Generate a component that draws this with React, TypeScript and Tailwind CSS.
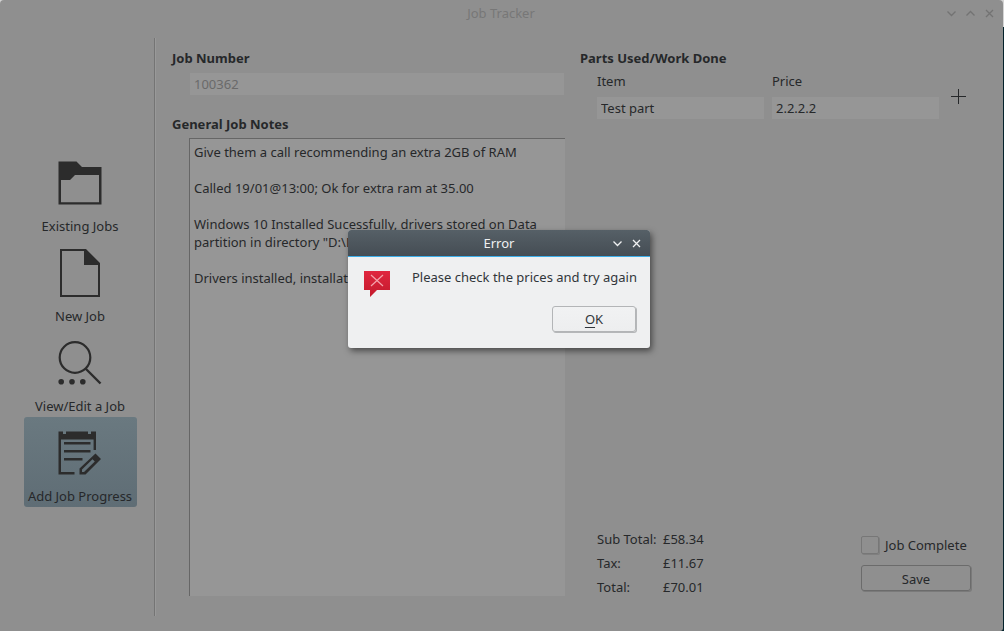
import React, { useState } from "react";

const LINE = "h-[18px] leading-[18px]";
const FIELD =
  "block h-[22px] w-full min-w-0 bg-[#969696] px-1 leading-[22px] text-[#26282a] outline-none";

function FolderIcon() {
  return (
    <svg width="44" height="44" viewBox="0 0 44 44" fill="#2c2c2c" aria-hidden="true">
      <path
        fillRule="evenodd"
        d="M0.5 0.5H18.5L24 6H43.5V43.5H0.5ZM3 19V41.2H41V14H17L12 19Z"
      />
    </svg>
  );
}

function PageIcon() {
  return (
    <svg width="40" height="48" viewBox="0 0 40 48" fill="#2c2c2c" aria-hidden="true">
      <path fillRule="evenodd" d="M0 0H26L40 14V48H0ZM2 2V46H38V16H24V2Z" />
    </svg>
  );
}

function SearchIcon() {
  return (
    <svg width="44" height="44" viewBox="0 0 44 44" fill="#2c2c2c" aria-hidden="true">
      <circle cx="17" cy="16.5" r="15.3" fill="none" stroke="#2c2c2c" strokeWidth="2.2" />
      <path d="M27.5 27.5L42.5 42.5" stroke="#2c2c2c" strokeWidth="2.4" />
      <circle cx="3.2" cy="40.7" r="2.8" />
      <circle cx="14" cy="40.7" r="2.8" />
      <circle cx="24.8" cy="40.7" r="2.8" />
    </svg>
  );
}

function NoteIcon() {
  return (
    <svg width="44" height="44" viewBox="0 0 44 44" fill="#2c2c2c" aria-hidden="true">
      <path d="M0.5 0.5H5V3H8V0.5H30V3H33V0.5H38V19H35.6V8.5H3V41H16.5V43.4H0.5Z" />
      <path d="M6 11H32.5V13.5H6ZM6 19H32.5V21.5H6ZM6 27H24.5V29.5H6Z" />
      <path
        fillRule="evenodd"
        d="M21.5 37.5L37.5 22.5L43 28L27.5 43.5H21.5ZM24 38.5V41H26L36.8 30.4L34.5 28.2Z"
      />
    </svg>
  );
}

function Glyph({ d, color }: { d: string; color: string }) {
  return (
    <svg width="9" height="9" viewBox="0 0 9 9" fill="none" stroke={color} strokeWidth="1.3" aria-hidden="true">
      <path d={d} />
    </svg>
  );
}

const DOWN = "M0.5 2.5L4.5 6.5L8.5 2.5";
const UP = "M0.5 6.5L4.5 2.5L8.5 6.5";
const CROSS = "M1 1L8 8M8 1L1 8";

const NAV = [
  { label: "Existing Jobs", icon: <FolderIcon /> },
  { label: "New Job", icon: <PageIcon /> },
  { label: "View/Edit a Job", icon: <SearchIcon /> },
  { label: "Add Job Progress", icon: <NoteIcon /> },
];

const NOTES = `Give them a call recommending an extra 2GB of RAM

Called 19/01@13:00; Ok for extra ram at 35.00

Windows 10 Installed Sucessfully, drivers stored on Data partition in directory "D:\\Drivers"

Drivers installed, installation complete`;

const TOTALS = [
  ["Sub Total:", "£58.34"],
  ["Tax:", "£11.67"],
  ["Total:", "£70.01"],
];

function ErrorDialog({ onClose }: { onClose: () => void }) {
  return (
    <div
      role="alertdialog"
      aria-labelledby="error-title"
      aria-describedby="error-text"
      className="absolute top-[230px] left-[348px] w-[302px] rounded-[3px] bg-[#eff0f1] text-[#31363b] shadow-[2px_3px_6px_rgba(0,0,0,0.5)]"
    >
      <header className="flex h-[27px] items-center rounded-t-[3px] border-b border-[#3daee9] bg-linear-to-b from-[#566067] to-[#454d54] px-[9px] text-[#eff0f1]">
        <h2 id="error-title" className="flex-1 pt-[2px] pl-[28px] text-center">
          Error
        </h2>
        <div className="flex gap-[10px]">
          <button type="button" aria-label="Minimise">
            <Glyph d={DOWN} color="#eff0f1" />
          </button>
          <button type="button" aria-label="Close" onClick={onClose}>
            <Glyph d={CROSS} color="#eff0f1" />
          </button>
        </div>
      </header>
      <div className="flex justify-between pt-[11px] pr-[13px] pl-[15px]">
        <svg width="28" height="30" viewBox="0 0 28 30" className="mt-[2px]" aria-hidden="true">
          <defs>
            <linearGradient id="alert" x1="0" y1="0" x2="0" y2="1">
              <stop offset="0" stopColor="#e0263f" />
              <stop offset="1" stopColor="#c31a2c" />
            </linearGradient>
          </defs>
          <path d="M1 1H27V20H14L7 27V20H1Z" fill="url(#alert)" />
          <path d="M8 5L20 16M20 5L8 16" stroke="#f3a3ab" strokeWidth="1.2" />
        </svg>
        <p id="error-text" className={LINE}>
          Please check the prices and try again
        </p>
      </div>
      <div className="flex justify-end pt-[6px] pr-[14px] pb-4">
        <button
          type="button"
          onClick={onClose}
          className="h-[26px] w-[84px] rounded-[3px] border border-[#b3b5b7] bg-linear-to-b from-[#f1f2f3] to-[#edeeef] pt-[2px] shadow-[1px_1px_0_#b5b7b9]"
        >
          <span className="underline underline-offset-3">O</span>K
        </button>
      </div>
    </div>
  );
}

export default function App() {
  const [open, setOpen] = useState(true);
  const [active, setActive] = useState("Add Job Progress");

  return (
    <div className="flex min-h-screen flex-col bg-[linear-gradient(#d4d4d4_27px,#04222b_27px)] pr-px font-['Noto_Sans',sans-serif] text-[13px] text-[#26282a]">
      <div className="relative flex flex-1 flex-col rounded-t-[4px] rounded-br-[3px] bg-[#8f8f8f]">
        <header className="flex h-[26px] shrink-0 items-center px-[9px] text-[#777777]">
          <h1 className="flex-1 pt-[2px] pl-[46px] text-center">Job Tracker</h1>
          <div className="flex gap-[10px]">
            <button type="button" aria-label="Minimise window">
              <Glyph d={DOWN} color="#737373" />
            </button>
            <button type="button" aria-label="Maximise window">
              <Glyph d={UP} color="#737373" />
            </button>
            <button type="button" aria-label="Close window">
              <Glyph d={CROSS} color="#737373" />
            </button>
          </div>
        </header>

        <div className="flex flex-1 pt-3 pb-[15px] pl-6">
          <nav className="flex w-[113px] shrink-0 flex-col justify-center">
            {NAV.map(({ label, icon }) => (
              <button
                key={label}
                type="button"
                onClick={() => setActive(label)}
                className={
                  active === label
                    ? "flex h-[90px] flex-col items-center rounded-[3px] bg-linear-to-b from-[#6a7980] to-[#5f6d75] pr-px"
                    : "flex h-[90px] flex-col items-center rounded-[3px] pr-px"
                }
              >
                <span className="flex h-[70px] items-center justify-center pt-[2px]">{icon}</span>
                <span className="leading-[18px] whitespace-nowrap">{label}</span>
              </button>
            ))}
          </nav>
          <div className="ml-[17px] w-[2px] shrink-0 border-r border-l border-r-[#999999] border-l-[#747474]" />

          <form
            className="flex flex-1 gap-[15px] pl-4"
            onSubmit={(event) => event.preventDefault()}
          >
            <section className="flex w-[393px] flex-auto flex-col pt-[11px] pb-5">
              <label htmlFor="job-number" className={`${LINE} font-bold`}>
                Job Number
              </label>
              <div className="mt-[6px] mr-px ml-[18px]">
                <input
                  id="job-number"
                  defaultValue="100362"
                  disabled
                  className="block h-[22px] w-full bg-[#969696] px-1 leading-[22px] text-[#6a6a6a]"
                />
              </div>
              <label htmlFor="notes" className={`${LINE} mt-5 font-bold`}>
                General Job Notes
              </label>
              <textarea
                id="notes"
                defaultValue={NOTES}
                className="mt-[5px] ml-[17px] flex-1 resize-none border-t border-l border-[#666666] bg-[#969696] px-1 py-1 leading-[18px] outline-none"
              />
            </section>

            <section className="flex w-[423px] flex-auto flex-col pt-[11px] pr-8">
              <h2 className={`${LINE} font-bold`}>Parts Used/Work Done</h2>
              <div className="mt-[5px] flex pl-[17px]">
                <div className="flex flex-1 gap-2">
                  <label className="flex-1">
                    <span className={`${LINE} block`}>Item</span>
                    <input defaultValue="Test part" className={`${FIELD} mt-[7px]`} />
                  </label>
                  <label className="flex-1">
                    <span className={`${LINE} block`}>Price</span>
                    <input defaultValue="2.2.2.2" className={`${FIELD} mt-[7px]`} />
                  </label>
                </div>
                <button
                  type="button"
                  aria-label="Add part"
                  className="flex w-8 items-center justify-center pt-[2px] pl-[7px]"
                >
                  <svg width="16" height="16" viewBox="0 0 16 16" stroke="#26282a" aria-hidden="true">
                    <path d="M7.5 0V15M0 7.5H15" />
                  </svg>
                </button>
              </div>

              <div className="mt-auto flex items-end justify-between pl-[17px]">
                <table className="mb-[17px] leading-6">
                  <tbody>
                    {TOTALS.map(([name, value]) => (
                      <tr key={name}>
                        <th scope="row" className="w-[66px] text-left font-normal">
                          {name}
                        </th>
                        <td>{value}</td>
                      </tr>
                    ))}
                  </tbody>
                </table>
                <div className="mb-[25px] w-[110px]">
                  <div className="flex items-center gap-[6px]">
                    <input
                      id="complete"
                      type="checkbox"
                      className="size-[18px] shrink-0 appearance-none rounded-[2px] border border-[#777777] shadow-[1px_1px_0_#7f7f7f] checked:bg-[#5f6d75]"
                    />
                    <label htmlFor="complete" className="leading-5 whitespace-nowrap">
                      Job Complete
                    </label>
                  </div>
                  <button
                    type="submit"
                    className="mt-[10px] h-[26px] w-full rounded-[3px] border border-[#6b6b6b] pt-[3px] shadow-[1px_1px_0_#7a7a7a]"
                  >
                    Save
                  </button>
                </div>
              </div>
            </section>
          </form>
        </div>

        {open && <ErrorDialog onClose={() => setOpen(false)} />}
      </div>
    </div>
  );
}
